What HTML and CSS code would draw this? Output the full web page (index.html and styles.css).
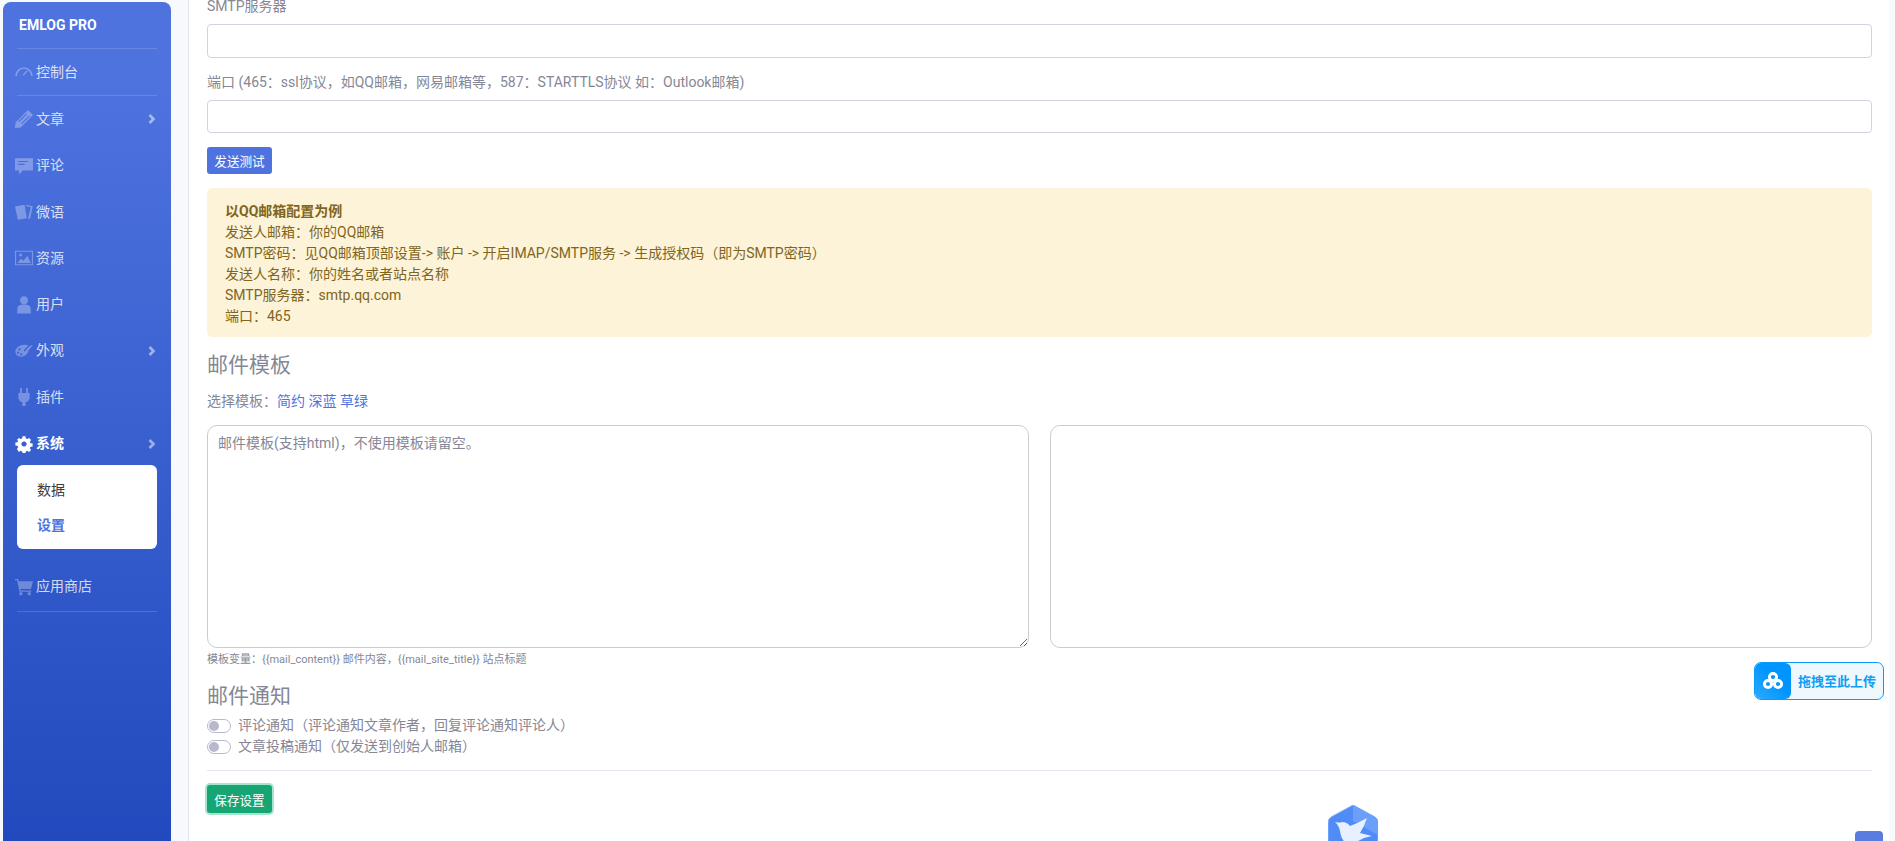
FILE: index.html
```html
<!DOCTYPE html>
<html lang="zh-CN">
<head>
<meta charset="utf-8">
<title>设置</title>
<link rel="stylesheet" href="styles.css">
</head>
<body>
<div class="app">
  <nav class="sidebar">
    <div class="brand">EMLOG PRO</div>
    <div class="divider brand-divider"></div>
    <a class="nav-item nav-first"><svg class="ico" viewBox="0 0 16 16"><path d="M1 11.500A7 7 0 0 1 15 11.500" fill="none" stroke="currentColor" stroke-width="1.400"/><path d="M7.400 10.600 11 6.800" stroke="currentColor" stroke-width="1.200"/></svg><span>控制台</span></a>
    <div class="divider"></div>
    <a class="nav-item"><svg class="ico" viewBox="0 0 16 16"><path d="M11.500 0 16 4.500 5 15.500 0 16 .5 11zM10 3 3 10l.7.7 7-7zM12.500 4.800 5.500 11.800l.7.7 7-7z" fill-rule="evenodd"/></svg><span>文章</span><svg class="chev" viewBox="0 0 8 10"><path d="M1.500 1 5.500 5l-4 4" fill="none" stroke="currentColor" stroke-width="2.600"/></svg></a>
    <a class="nav-item"><svg class="ico" viewBox="0 0 16 16"><path d="M0 1h16v11H7l-3.500 3.400V12H0zM2.500 3.500v1h9v-1zM2.500 6v1h6V6z" fill-rule="evenodd"/></svg><span>评论</span></a>
    <a class="nav-item"><svg class="ico" viewBox="0 0 16 16"><path d="M0 3 8.500 1.500 10.500 13.500 2.500 14.800z"/><path d="M10 1.500 15.800 2.800 13.500 13.800 11.500 14 14 3.800 9.800 2.600z"/></svg><span>微语</span></a>
    <a class="nav-item"><svg class="ico" viewBox="0 0 16 16"><path d="M0 1.500h16v13H0zM1 2.500v11h14v-11zM2 12.500l3.500-4 2 2L11 6l3 6.500zM5 4a1.300 1.300 0 1 0 .01 0z" fill-rule="evenodd"/></svg><span>资源</span></a>
    <a class="nav-item"><svg class="ico" viewBox="0 0 16 16"><circle cx="8" cy="3.800" r="3.500"/><path d="M2 15.500v-4.500C2 8.500 4.500 7.500 8 7.500s6 1 6 3.500v4.500z"/></svg><span>用户</span></a>
    <a class="nav-item"><svg class="ico" viewBox="0 0 16 16"><path d="M16 2.500C13.500 3.200 11 5 9.500 7.500 8.800 9 7.500 8.500 8 7.300 9 5.800 10.500 4.400 12 3.200 8 1.600 2.500 3 .5 7c-1 3.500 1.500 6 5 6 3 0 5.500-2 6.500-5.500zM4 5.500a1 1 0 1 0 .01 0zM2.800 8.500a1 1 0 1 0 .01 0zM5.500 10a1 1 0 1 0 .01 0z" fill-rule="evenodd"/></svg><span>外观</span><svg class="chev" viewBox="0 0 8 10"><path d="M1.500 1 5.500 5l-4 4" fill="none" stroke="currentColor" stroke-width="2.600"/></svg></a>
    <a class="nav-item"><svg class="ico" viewBox="0 0 16 16"><path d="M4.500 0h1.600v4.500h3.800V0h1.600v4.500H13v4c0 2.500-1.800 3.800-3.500 4.200V16h-3v-3.300C4.800 12.300 3 11 3 8.500v-4h1.500z"/></svg><span>插件</span></a>
    <a class="nav-item nav-active"><svg class="ico" viewBox="0 0 16 16"><path d="M6.500 0h3l.4 2.200 1.500.7L13.300 1.600l2.100 2.100-1.300 1.900.7 1.500 2.200.4v3l-2.200.4-.7 1.500 1.300 1.900-2.100 2.100-1.900-1.300-1.500.7-.4 2.200h-3l-.4-2.200-1.500-.7-1.900 1.300L.6 13.300l1.300-1.900-.7-1.500L-1 9.500v-3l2.200-.4.7-1.500L.6 3.700l2.100-2.100 1.900 1.300 1.500-.7zM8 5.300a2.700 2.700 0 1 0 .01 0z" fill-rule="evenodd" transform="translate(1.200 1.200) scale(.85)"/></svg><span>系统</span><svg class="chev" viewBox="0 0 8 10"><path d="M1.500 1 5.500 5l-4 4" fill="none" stroke="currentColor" stroke-width="2.600"/></svg></a>
    <div class="submenu">
      <a class="sub-item">数据</a>
      <a class="sub-item sub-active">设置</a>
    </div>
    <a class="nav-item nav-store"><svg class="ico" viewBox="0 0 16 16"><path d="M0 .8h2.800l.5 2H16l-1.800 7H4.800l.3 1.200h9.400v1.300H4L1.800 2.100H0z"/><circle cx="5.200" cy="14" r="1.500"/><circle cx="12.700" cy="14" r="1.500"/></svg><span>应用商店</span></a>
    <div class="divider store-divider"></div>
  </nav>

  <main class="content">
    <form class="form">
      <label class="field-label">SMTP服务器</label>
      <input class="field-input" type="text">
      <label class="field-label field-gap">端口 (465：ssl协议，如QQ邮箱，网易邮箱等，587：STARTTLS协议 如：Outlook邮箱)</label>
      <input class="field-input" type="text">
      <button class="btn btn-test" type="button">发送测试</button>
      <div class="alert">
        <b>以QQ邮箱配置为例</b><br>
        发送人邮箱：你的QQ邮箱<br>
        SMTP密码：见QQ邮箱顶部设置-&gt; 账户 -&gt; 开启IMAP/SMTP服务 -&gt; 生成授权码（即为SMTP密码）<br>
        发送人名称：你的姓名或者站点名称<br>
        SMTP服务器：smtp.qq.com<br>
        端口：465
      </div>
      <h4 class="section-title">邮件模板</h4>
      <p class="template-pick">选择模板：<a>简约</a> <a>深蓝</a> <a>草绿</a></p>
      <div class="template-grid">
        <textarea class="template-area" placeholder="邮件模板(支持html)，不使用模板请留空。"></textarea>
        <div class="template-preview"></div>
      </div>
      <small class="hint">模板变量：{{mail_content}} 邮件内容，{{mail_site_title}} 站点标题</small>
      <h4 class="section-title section-notify">邮件通知</h4>
      <div class="switch-row"><span class="switch"></span><span>评论通知（评论通知文章作者，回复评论通知评论人）</span></div>
      <div class="switch-row"><span class="switch"></span><span>文章投稿通知（仅发送到创始人邮箱）</span></div>
      <hr class="rule">
      <button class="btn btn-save" type="button">保存设置</button>
    </form>
  </main>
</div>

<div class="upload-badge">
  <span class="upload-icon"><svg viewBox="0 0 24 24" width="24" height="24"><g fill="none" stroke="#fff" stroke-width="3"><circle cx="12" cy="8" r="3.600"/><circle cx="7" cy="15" r="3.600"/><circle cx="17" cy="15" r="3.600"/></g></svg></span>
  <span class="upload-text">拖拽至此上传</span>
</div>

<svg class="logo" viewBox="0 0 50 56" width="50" height="56">
  <path d="M25 0 47 12Q50 14 50 18V40Q50 44 47 46L25 56 3 46Q0 44 0 40V18Q0 14 3 12Z" fill="#4f8cf8" stroke="#8ab2fb" stroke-width="1"/>
  <path d="M25 0 47 12Q50 14 50 18V30L25 16Z" fill="#6a9ffa"/>
  <path d="M7 17Q12 18 14 17 19 17 22 21 30 18 39 13 36 22 32 28L44 31 36 33 30 36 28 42C20 42 13 36 12 26 11 22 10 20 7 17Z" fill="#e8effd"/>
</svg>

<div class="scroll-top"></div>
</body>
</html>
```

FILE: styles.css
```css
* { box-sizing: border-box; }

html, body {
  margin: 0;
  height: 841px;
  overflow: hidden;
}

body {
  background: #f8f9fc;
  color: #858796;
  font-family: Roboto, "Noto Sans CJK SC", sans-serif;
  font-size: 14px;
  line-height: 21px;
}

.app {
  display: flex;
  height: 841px;
  padding-right: 6px;
}

/* Sidebar */
.sidebar {
  flex: 0 0 168px;
  margin: 2px 0 0 3px;
  padding: 0 14px;
  border-radius: 8px 8px 0 0;
  background: linear-gradient(180deg, #4e73df 10%, #224abe 100%);
  color: rgba(255, 255, 255, .8);
}

.brand {
  height: 46px;
  padding: 12px 2px 0;
  color: #fff;
  font-size: 14px;
  font-weight: 700;
  line-height: 22px;
}

.divider {
  height: 1px;
  background: rgba(255, 255, 255, .15);
}

.store-divider { margin-top: 1px; }

.nav-item {
  display: flex;
  align-items: center;
  height: 46.300px;
  margin: 0 -1px;
  font-size: 14px;
}

.ico {
  flex: 0 0 18px;
  width: 18px;
  height: 18px;
  margin: 0 3px 0 -1px;
  fill: currentColor;
  color: rgba(255, 255, 255, .3);
}

.chev {
  width: 8px;
  height: 10px;
  margin-left: auto;
  margin-right: 2px;
  color: rgba(255, 255, 255, .5);
}

.nav-active { color: #fff; font-weight: 700; }
.nav-active .ico { color: #fff; }
.nav-active .chev { color: rgba(255, 255, 255, .5); }

.submenu {
  height: 84px;
  margin-top: -2px;
  padding: 8px 0 6px;
  border-radius: 6px;
  background: #fff;
}

.sub-item {
  display: block;
  height: 35px;
  padding-left: 20px;
  color: #3a3b45;
  font-size: 14px;
  line-height: 35px;
}

.sub-active { color: #4e73df; font-weight: 700; }

.nav-store {
  margin-top: 15px;
}

/* Content */
.content {
  flex: 1;
  margin-left: 17px;
  padding: 0 17px 0 18px;
  border-left: 1px solid #e3e6f0;
  background: #fff;
}

.form {
  display: flex;
  flex-direction: column;
  align-items: stretch;
  margin-top: -4px;
}

.field-label {
  margin-bottom: 7px;
  font-size: 14px;
}

.field-gap { margin-top: 14px; margin-bottom: 7px; }

.field-input {
  height: 33.500px;
  border: 1px solid #d1d3e2;
  border-radius: 4px;
  background: #fff;
}

.btn {
  align-self: flex-start;
  width: 65px;
  padding: 0;
  border: 0;
  border-radius: 3px;
  color: #fff;
  font-family: inherit;
  font-size: 12.600px;
}

.btn-test {
  height: 27px;
  margin-top: 14px;
  background: #4e73df;
}

.alert {
  height: 149px;
  margin-top: 14px;
  padding: 12px 17px;
  border: 1px solid #fdf3d8;
  border-radius: 5px;
  background: #fdf3d8;
  color: #806520;
  font-size: 14px;
}

.section-title {
  margin: 16px 0 0;
  font-size: 21px;
  font-weight: 400;
  line-height: 25px;
}

.template-pick {
  margin: 13px 0 0;
  font-size: 14px;
}

.template-pick a { color: #4e73df; }

.template-grid {
  display: grid;
  grid-template-columns: 1fr 1fr;
  gap: 21px;
  margin-top: 13px;
}

.template-area,
.template-preview {
  height: 223px;
  border: 1px solid #ccc;
  border-radius: 10px;
  background: #fff;
}

.template-area {
  padding: 6px 10px;
  font-family: inherit;
  font-size: 14px;
}

.template-area::placeholder { color: #858796; }

.hint {
  margin-top: 2px;
  font-size: 11px;
  line-height: 20px;
}

.section-notify { margin-top: 14px; }

.switch-row {
  display: flex;
  align-items: center;
  gap: 7px;
  height: 21px;
  font-size: 14px;
}

.section-notify + .switch-row { margin-top: 6px; }

.switch {
  position: relative;
  width: 24px;
  height: 14px;
  border: 1px solid #b7b9cc;
  border-radius: 7px;
  background: #fff;
}

.switch::after {
  content: "";
  position: absolute;
  top: 1px;
  left: 1px;
  width: 10px;
  height: 10px;
  border-radius: 50%;
  background: #b7b9cc;
}

.rule {
  width: 100%;
  margin: 13px 0 14px;
  border: 0;
  border-top: 1px solid #e3e6f0;
}

.btn-save {
  height: 28px;
  background: #17a673;
  box-shadow: 0 0 0 2px #a3e6cd;
}

/* Floating widgets */
.upload-badge {
  position: fixed;
  top: 662px;
  left: 1754px;
  display: flex;
  align-items: center;
  width: 130px;
  height: 38px;
  border: 1px solid #0a9cf8;
  border-radius: 7px;
  background: #f0f8ff;
}

.upload-icon {
  display: flex;
  flex: 0 0 36px;
  align-items: center;
  justify-content: center;
  height: 36px;
  border-radius: 6px;
  background: linear-gradient(45deg, #2bacff, #0094ff 55%);
}

.upload-text {
  margin-left: 7px;
  color: #0d9ff5;
  font-size: 13px;
  font-weight: 700;
}

.logo {
  position: fixed;
  top: 805px;
  left: 1328px;
}

.scroll-top {
  position: fixed;
  top: 831px;
  left: 1855px;
  width: 28px;
  height: 28px;
  border-radius: 4px;
  background: #5a7be0;
}
```
